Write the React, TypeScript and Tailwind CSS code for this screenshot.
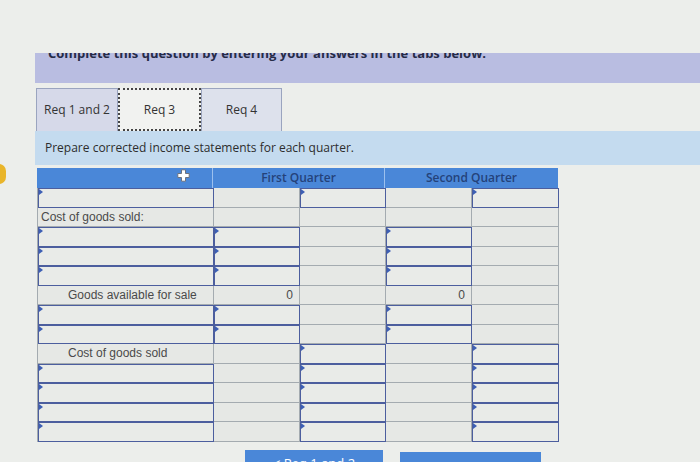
import React from 'react';

type Cell = 'plain' | 'input' | 'zero';
type Row = { label: string | null; indent?: boolean; cells: Cell[] };

const rows: Row[] = [
  { label: null, cells: ['plain', 'input', 'plain', 'input'] },
  { label: 'Cost of goods sold:', cells: ['plain', 'plain', 'plain', 'plain'] },
  { label: null, cells: ['input', 'plain', 'input', 'plain'] },
  { label: null, cells: ['input', 'plain', 'input', 'plain'] },
  { label: null, cells: ['input', 'plain', 'input', 'plain'] },
  { label: 'Goods available for sale', indent: true, cells: ['zero', 'plain', 'zero', 'plain'] },
  { label: null, cells: ['input', 'plain', 'input', 'plain'] },
  { label: null, cells: ['input', 'plain', 'input', 'plain'] },
  { label: 'Cost of goods sold', indent: true, cells: ['plain', 'input', 'plain', 'input'] },
  { label: null, cells: ['plain', 'input', 'plain', 'input'] },
  { label: null, cells: ['plain', 'input', 'plain', 'input'] },
  { label: null, cells: ['plain', 'input', 'plain', 'input'] },
  { label: null, cells: ['plain', 'input', 'plain', 'input'] },
];

// little blue flag in the corner of every entry cell
const Flag = () => (
  <span className="absolute left-0 top-0 h-0 w-0 border-y-[3px] border-l-[4px] border-y-transparent border-l-[#3d5fb4]" />
);

const InputCell = () => (
  <div className="relative h-[19.5px] border-[1.5px] border-[#4c5e9e] bg-[#e9ebe8]">
    <Flag />
  </div>
);

const PlainCell = ({ children, right }: { children?: React.ReactNode; right?: boolean }) => (
  <div
    className={`flex h-[19.5px] items-center border-r border-b border-[#a4abb0] bg-[#e6e8e5] text-[12px] text-[#4a4a4a] ${
      right ? 'justify-end pr-[6px]' : ''
    }`}
  >
    {children}
  </div>
);

export default function App() {
  return (
    <div
      className="h-[462px] w-[700px] overflow-hidden bg-[#eceeeb]"
      style={{ fontFamily: '"Open Sans", "Liberation Sans", sans-serif' }}
    >
      {/* yellow dot peeking at the left edge */}
      <div className="relative">
        <div className="absolute left-[-8px] top-[164px] h-[20px] w-[14px] rounded-full bg-[#e9b52a]" />
      </div>

      <div className="h-[53px]" />

      {/* instruction band, top half hidden */}
      <div className="ml-[35px] h-[30px] overflow-hidden bg-[#b9bde1]">
        <p className="-mt-[6px] pl-[13px] text-[13px] leading-[13px] font-bold text-[#262b47]">
          Complete this question by entering your answers in the tabs below.
        </p>
      </div>

      {/* tabs */}
      <div className="ml-[36px] mt-[5px] flex h-[43px]">
        <div className="flex w-[82px] items-center justify-center border border-b-0 border-[#9aa4bf] bg-[#d6d9e9] text-[12px] text-[#333]">
          Req 1 and 2
        </div>
        <div className="flex w-[83px] items-center justify-center border-2 border-dotted border-[#444] bg-[#f1f2f0] text-[12px] text-[#333]">
          Req 3
        </div>
        <div className="flex w-[81px] items-center justify-center border border-b-0 border-[#9aa4bf] bg-[#dde1ec] text-[12px] text-[#333]">
          Req 4
        </div>
      </div>

      {/* prompt band */}
      <div className="ml-[35px] flex h-[34px] items-center bg-[#c4dbef] pl-[10px] text-[12px] text-[#2d2d2d]">
        Prepare corrected income statements for each quarter.
      </div>

      {/* statement table */}
      <div className="ml-[37px] mt-[3px] w-[521px]">
        <div className="grid h-[20px] grid-cols-[176px_172px_173px] bg-[#4a87d8] text-[12px] font-semibold text-[#24427a]">
          <div className="relative border-r border-[#9cc0ee]">
            <svg className="absolute left-[140px] top-[1px]" width="13" height="13" viewBox="0 0 13 13">
              <path
                d="M4.5 0.8h4v3.7h3.7v4h-3.7v3.7h-4v-3.7h-3.7v-4h3.7z"
                fill="#fff"
                stroke="#6b7280"
                strokeWidth="1"
              />
            </svg>
          </div>
          <div className="flex items-center justify-center border-r border-[#9cc0ee]">First Quarter</div>
          <div className="flex items-center justify-center">Second Quarter</div>
        </div>

        <div
          className="grid grid-cols-[176px_86px_86px_86px_87px] border-l border-[#a4abb0]"
          style={{ fontFamily: '"Liberation Sans", Arial, sans-serif' }}
        >
          {rows.map((row, i) => (
            <React.Fragment key={`row-${i}`}>
              {row.label === null ? (
                <InputCell />
              ) : (
                <PlainCell>
                  <span className={row.indent ? 'pl-[30px]' : 'pl-[3px]'}>{row.label}</span>
                </PlainCell>
              )}
              {row.cells.map((c, j) =>
                c === 'input' ? (
                  <InputCell key={`c-${i}-${j}`} />
                ) : (
                  <PlainCell key={`c-${i}-${j}`} right={c === 'zero'}>
                    {c === 'zero' ? '0' : null}
                  </PlainCell>
                )
              )}
            </React.Fragment>
          ))}
        </div>
      </div>

      {/* nav buttons, mostly below the fold */}
      <div className="mt-[8px] flex gap-[17px] pl-[245px]">
        <div className="h-[34px] w-[138px] bg-[#4a87d8] pt-[4px] text-center text-[13px] text-white">
          &lt; Req 1 and 2
        </div>
        <div className="mt-[2px] h-[34px] w-[141px] bg-[#4a87d8] pt-[12px] text-center text-[13px] text-white">
          Req 4 &gt;
        </div>
      </div>
    </div>
  );
}
